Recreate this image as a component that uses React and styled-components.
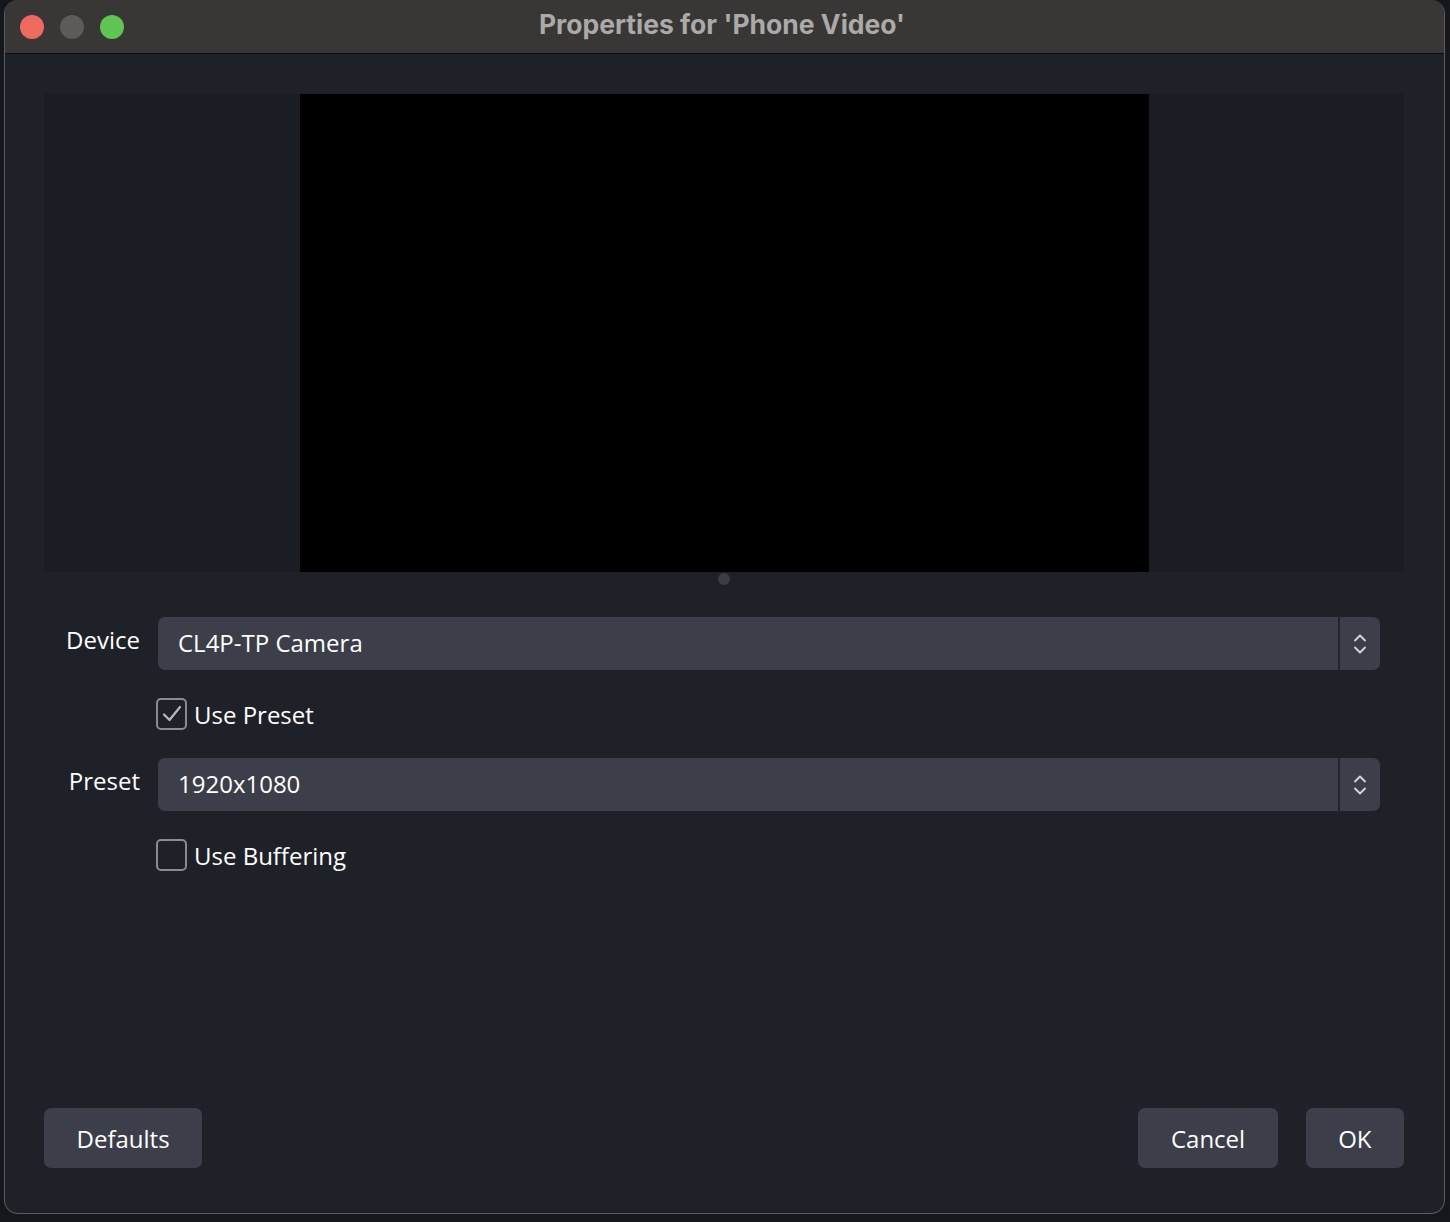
import React from 'react';
import styled, {createGlobalStyle} from 'styled-components';

const GlobalStyle = createGlobalStyle`
	html, body {
		margin: 0;
		padding: 0;
		background: #15171c;
	}
	body {
		font-family: "Open Sans", "Noto Sans", sans-serif;
	}
`;

const Page = styled.div`
	width: 1450px;
	height: 1222px;
	padding-left: 4px;
	box-sizing: border-box;
	background: #15171c;
`;

const Window = styled.div`
	width: 1441px;
	height: 1214px;
	box-sizing: border-box;
	border: 1px solid #5b5c60;
	border-top: none;
	border-radius: 14px;
	overflow: hidden;
	background: #1f2129;
	display: flex;
	flex-direction: column;
`;

const TitleBar = styled.div`
	height: 53px;
	flex-shrink: 0;
	background: #383735;
	border-bottom: 1px solid #0c0c0c;
	display: flex;
	align-items: center;
	position: relative;
`;

const Lights = styled.div`
	display: flex;
	gap: 16px;
	padding-left: 15px;
`;

const Light = styled.span`
	width: 24px;
	height: 24px;
	border-radius: 50%;
	background: ${p => p.color};
`;

const Title = styled.div`
	position: absolute;
	left: 0;
	right: 0;
	top: 7px;
	text-align: center;
	font-family: Inter, "Noto Sans", sans-serif;
	font-weight: 700;
	font-size: 26.5px;
	line-height: 34px;
	color: #abaaa8;
	padding-right: 5px;
`;

const Body = styled.div`
	flex: 1;
	display: flex;
	flex-direction: column;
	padding: 40px 40px 45px 39px;
`;

const Preview = styled.div`
	height: 478px;
	background: #1b1d24;
	display: flex;
	justify-content: center;
`;

const Video = styled.div`
	width: 849px;
	height: 100%;
	background: #000;
`;

const Handle = styled.div`
	width: 12px;
	height: 12px;
	border-radius: 50%;
	background: #3b3d46;
	margin: 1px auto 0;
`;

const Form = styled.div`
	display: grid;
	grid-template-columns: 96px 1fr;
	column-gap: 18px;
	row-gap: 28px;
	margin-top: 32px;
	padding-right: 24px;
`;

const Label = styled.div`
	text-align: right;
	align-self: center;
	color: #fff;
	font-size: 24px;
	padding-bottom: 8px;
`;

const Combo = styled.div`
	height: 53px;
	background: #3c3e4a;
	border-radius: 7px;
	display: flex;
	align-items: stretch;
	overflow: hidden;
`;

const ComboValue = styled.div`
	flex: 1;
	display: flex;
	align-items: center;
	padding-left: 20px;
	padding-bottom: 2px;
	color: #fff;
	font-size: 24px;
`;

const ComboArrows = styled.div`
	width: 40px;
	border-left: 2px solid #23252c;
	display: flex;
	align-items: center;
	justify-content: center;
`;

const CheckRow = styled.label`
	grid-column: 2;
	display: flex;
	align-items: center;
	gap: 7px;
	height: 32px;
	margin-left: -2px;
	color: #fff;
	font-size: 24px;
`;

const Box = styled.span`
	width: 31px;
	height: 32px;
	box-sizing: border-box;
	border: 2px solid #8c8c90;
	border-radius: 5px;
	display: flex;
	align-items: center;
	justify-content: center;
`;

const Spacer = styled.div`
	flex: 1;
`;

const Footer = styled.div`
	display: flex;
	gap: 28px;
`;

const Button = styled.div`
	height: 60px;
	padding: 0 32.5px;
	background: #3c3e4a;
	border-radius: 7px;
	display: flex;
	align-items: center;
	color: #fff;
	font-size: 24px;
	margin-left: ${p => (p.push ? 'auto' : '0')};
`;

const Arrows = () => (
	<svg width="14" height="24" viewBox="0 0 14 24" fill="none" stroke="#d8d8dc" strokeWidth="1.8" strokeLinecap="round" strokeLinejoin="round">
		<path d="M2 8.5 L7 3.5 L12 8.5" />
		<path d="M2 15.5 L7 20.5 L12 15.5" />
	</svg>
);

const Check = () => (
	<svg width="22" height="22" viewBox="0 0 22 22" fill="none" stroke="#b8b8bc" strokeWidth="2.2" strokeLinecap="round" strokeLinejoin="round">
		<path d="M3 11.5 L8.5 17 L19 4" />
	</svg>
);

const Checkbox = ({checked, children}) => (
	<CheckRow>
		<Box>{checked && <Check />}</Box>
		{children}
	</CheckRow>
);

const Select = ({value}) => (
	<Combo>
		<ComboValue>{value}</ComboValue>
		<ComboArrows><Arrows /></ComboArrows>
	</Combo>
);

export default function App() {
	return (
		<Page>
			<GlobalStyle />
			<Window>
				<TitleBar>
					<Lights>
						<Light color="#ed6a5e" />
						<Light color="#5c5b59" />
						<Light color="#5fc453" />
					</Lights>
					<Title>Properties for 'Phone Video'</Title>
				</TitleBar>
				<Body>
					<Preview>
						<Video />
					</Preview>
					<Handle />
					<Form>
						<Label>Device</Label>
						<Select value="CL4P-TP Camera" />
						<Checkbox checked>Use Preset</Checkbox>
						<Label>Preset</Label>
						<Select value="1920x1080" />
						<Checkbox>Use Buffering</Checkbox>
					</Form>
					<Spacer />
					<Footer>
						<Button>Defaults</Button>
						<Button push>Cancel</Button>
						<Button>OK</Button>
					</Footer>
				</Body>
			</Window>
		</Page>
	);
}
